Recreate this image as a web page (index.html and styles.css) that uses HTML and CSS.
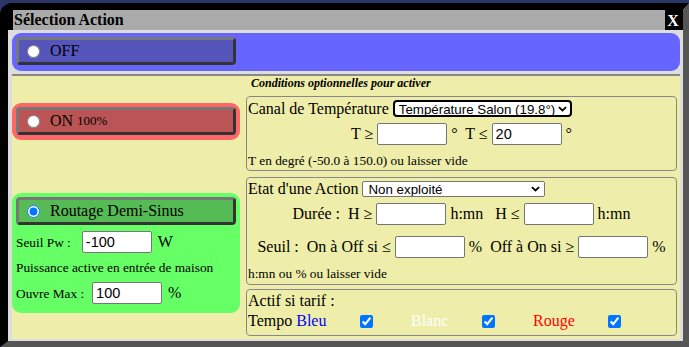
FILE: index.html
```html
<!DOCTYPE html>
<html lang="fr">
<head>
    <meta charset="UTF-8">
    <title>Routeur Solaire - Sélection Action</title>
    <link rel="stylesheet" href="styles.css">
</head>
<body>

<div id="entete">Routeur Solaire</div>

<div id="selectAction" class="dialog">
    <div class="dialog-head">
        <div class="dialog-title">Sélection Action</div>
        <div class="dialog-close">X</div>
    </div>
    <div class="dialog-body">
        <div class="mode mode-off">
            <label class="mode-btn"><input type="radio" name="mode">OFF</label>
        </div>

        <div class="conditions">
            <div class="col-modes">
                <div class="mode mode-on">
                    <label class="mode-btn"><input type="radio" name="mode">ON&nbsp;<span class="petit">100%</span></label>
                </div>
                <div class="mode mode-pw">
                    <label class="mode-btn"><input type="radio" name="mode" checked>Routage Demi-Sinus</label>
                    <div class="pw-row"><span class="lbl-seuil">Seuil Pw :</span><input type="text" value="-100"><span class="unit">W</span></div>
                    <div class="pw-info">Puissance active en entrée de maison</div>
                    <div class="pw-row"><span class="lbl-max">Ouvre Max :</span><input type="text" value="100"><span class="unit">%</span></div>
                </div>
            </div>

            <div class="col-cond">
                <div class="cond-title">Conditions optionnelles pour activer</div>

                <div class="cond-box box-temp">
                    <div class="cond-line line-temp">Canal de Température <span class="sel-wrap sel-canal"><select><option>Température Salon (19.8°)</option></select><svg class="chevron" viewBox="0 0 10 6"><path d="M1 1 L5 4.6 L9 1" fill="none" stroke="#000" stroke-width="2"/></svg></span></div>
                    <div class="cond-center">T ≥ <input type="text"> °&nbsp; T ≤ <input type="text" value="20"> °</div>
                    <div class="cond-note">T en degré (-50.0 à 150.0) ou laisser vide</div>
                </div>

                <div class="cond-box box-action">
                    <div class="cond-line">Etat d'une Action <span class="sel-wrap sel-action"><select><option>Non exploité</option></select><svg class="chevron" viewBox="0 0 10 6"><path d="M1 1 L5 4.6 L9 1" fill="none" stroke="#000" stroke-width="2"/></svg></span></div>
                    <div class="cond-center">Durée :&nbsp; H ≥ <input type="text"> h:mn&nbsp;&nbsp; H ≤ <input type="text"> h:mn</div>
                    <div class="cond-center row-seuil">Seuil :&nbsp;&nbsp;On à Off si ≤ <input type="text"> %&nbsp;&nbsp;Off à On si ≥ <input type="text"> %</div>
                    <div class="cond-note">h:mn ou % ou laisser vide</div>
                </div>

                <div class="cond-box box-tarif">
                    <div class="tarif-title">Actif si tarif :</div>
                    <div class="tarif-row">
                        <span>Tempo <span class="bleu">Bleu</span></span>
                        <input type="checkbox" checked>
                        <span class="blanc">Blanc</span>
                        <input type="checkbox" checked>
                        <span class="rouge">Rouge</span>
                        <input type="checkbox" checked>
                    </div>
                </div>
            </div>
        </div>
    </div>
</div>

</body>
</html>
```

FILE: styles.css
```css
html, body {
    margin: 0;
    padding: 0;
    height: 100%;
    overflow: hidden;
    background-color: #2b3566;
    font-family: "Liberation Serif", "Times New Roman", serif;
    font-size: 16px;
    color: #000;
}
#entete {
    margin-top: -30px;
    padding-left: 250px;
    text-align: center;
    color: white;
    font-size: 32px;
    font-weight: bold;
    line-height: 32px;
}

/* fenetre modale */
.dialog {
    position: fixed;
    top: 3px;
    left: 0;
    z-index: 2;
    width: 689px;
    height: 344px;
    box-sizing: border-box;
    border-style: solid;
    border-width: 7px 6px 6px 8px;
    border-color: #000 #555 #555 #000;
    border-top-left-radius: 12px;
    background-color: #ddd;
}
.dialog-head {
    display: flex;
    height: 20px;
    background-color: #000;
}
.dialog-title {
    flex: 1;
    margin-left: 5px;
    padding-left: 1px;
    background-color: #aaa;
    font-weight: bold;
    line-height: 20px;
}
.dialog-close {
    width: 16px;
    margin: 2px 2px 0 0;
    color: white;
    font-weight: bold;
    text-align: center;
    line-height: 18px;
    cursor: pointer;
}
.dialog-body {
    padding: 3px 3px 2px 4px;
}

/* boutons de mode */
.mode {
    border-radius: 9px;
    padding: 4px 3px 6px 4px;
}
.mode-off {
    background-color: #6666ff;
}
.mode-on {
    margin-top: 27px;
    padding-bottom: 5px;
    background-color: #ff6666;
}
.mode-pw {
    margin-top: 53px;
    padding-bottom: 9px;
    background-color: #66ff66;
}
.mode-btn {
    display: flex;
    align-items: center;
    width: 220px;
    height: 28px;
    box-sizing: border-box;
    border: 3px solid;
    border-color: #777 #333 #333 #777;
    border-radius: 4px;
    line-height: 22px;
    cursor: pointer;
}
.mode-btn input {
    width: 13px;
    height: 13px;
    margin: 0 10px 0 8px;
}
.mode-off .mode-btn {
    background-color: #5555bb;
}
.mode-on .mode-btn {
    background-color: #bb5555;
}
.mode-pw .mode-btn {
    background-color: #55bb55;
}
.petit {
    font-size: 13px;
}

/* routage */
.pw-row {
    height: 22px;
    margin-top: 6px;
    line-height: 22px;
    font-size: 13.33px;
    white-space: nowrap;
}
.pw-row + .pw-info + .pw-row {
    margin-top: 5px;
}
.lbl-seuil {
    margin-right: 11px;
}
.lbl-max {
    margin-right: 8px;
}
.unit {
    margin-left: 6px;
    font-size: 16px;
}
.pw-info {
    margin-top: 6px;
    font-size: 13.33px;
    line-height: 18px;
}

input[type="text"] {
    width: 70px;
    height: 22px;
    box-sizing: border-box;
    margin: 0;
    padding: 0 3px;
    border: 1px solid #767676;
    border-radius: 2px;
    background-color: white;
    font-family: "Liberation Sans", Arial, sans-serif;
    font-size: 14.5px;
    vertical-align: top;
}

/* zone jaune */
.conditions {
    display: flex;
    gap: 6px;
    height: 265px;
    box-sizing: border-box;
    margin-top: 3px;
    padding-right: 3px;
    border-top: 2px solid #888;
    background-color: #eeeeaa;
}
.col-modes {
    width: 228px;
}
.col-cond {
    width: 431px;
}
.cond-title {
    height: 20px;
    padding-left: 5px;
    font-size: 12px;
    font-weight: bold;
    font-style: italic;
    line-height: 14px;
}
.cond-box {
    box-sizing: border-box;
    padding: 0 1px;
    border: 1px solid #888;
    border-radius: 4px;
}
.box-action {
    margin-top: 6px;
}
.box-tarif {
    margin-top: 4px;
}
.cond-line {
    height: 22px;
    line-height: 22px;
    white-space: nowrap;
}
.line-temp {
    height: 23px;
    line-height: 23px;
}

/* listes deroulantes */
.sel-wrap {
    position: relative;
    display: inline-block;
    margin-top: 3px;
    vertical-align: top;
    line-height: normal;
}
.sel-wrap select {
    display: block;
    box-sizing: border-box;
    margin: 0;
    padding: 0 0 0 4px;
    appearance: none;
    -webkit-appearance: none;
    background-color: white;
    color: #000;
    font-family: "Liberation Sans", Arial, sans-serif;
    font-size: 13.33px;
}
.chevron {
    position: absolute;
    width: 9px;
    height: 6px;
    pointer-events: none;
}
.sel-canal select {
    width: 179px;
    height: 17px;
    border: 2px solid #000;
    border-radius: 4px;
}
.sel-canal .chevron {
    top: 6px;
    right: 5px;
}
.sel-action select {
    width: 183px;
    height: 16px;
    padding-left: 5px;
    border: 1px solid #767676;
    border-radius: 2px;
}
.sel-action .chevron {
    top: 5px;
    right: 5px;
}

.cond-center {
    height: 22px;
    margin-top: 3px;
    line-height: 22px;
    text-align: center;
    white-space: nowrap;
}
.row-seuil {
    margin-top: 11px;
}
.cond-note {
    padding-top: 7px;
    font-size: 13.33px;
    line-height: 17px;
}
.box-temp .cond-note {
    height: 25px;
    box-sizing: border-box;
}
.box-action .cond-note {
    height: 26px;
    box-sizing: border-box;
}

/* tarif */
.tarif-title {
    height: 22px;
    line-height: 22px;
}
.tarif-row {
    display: grid;
    grid-template-columns: 112px 51px 71px 51px 75px auto;
    align-items: start;
    height: 23px;
    line-height: 18px;
}
.tarif-row input {
    width: 13px;
    height: 13px;
    margin: 3px 0 0 0;
}
.bleu {
    color: blue;
}
.blanc {
    color: white;
}
.rouge {
    color: red;
}
```
